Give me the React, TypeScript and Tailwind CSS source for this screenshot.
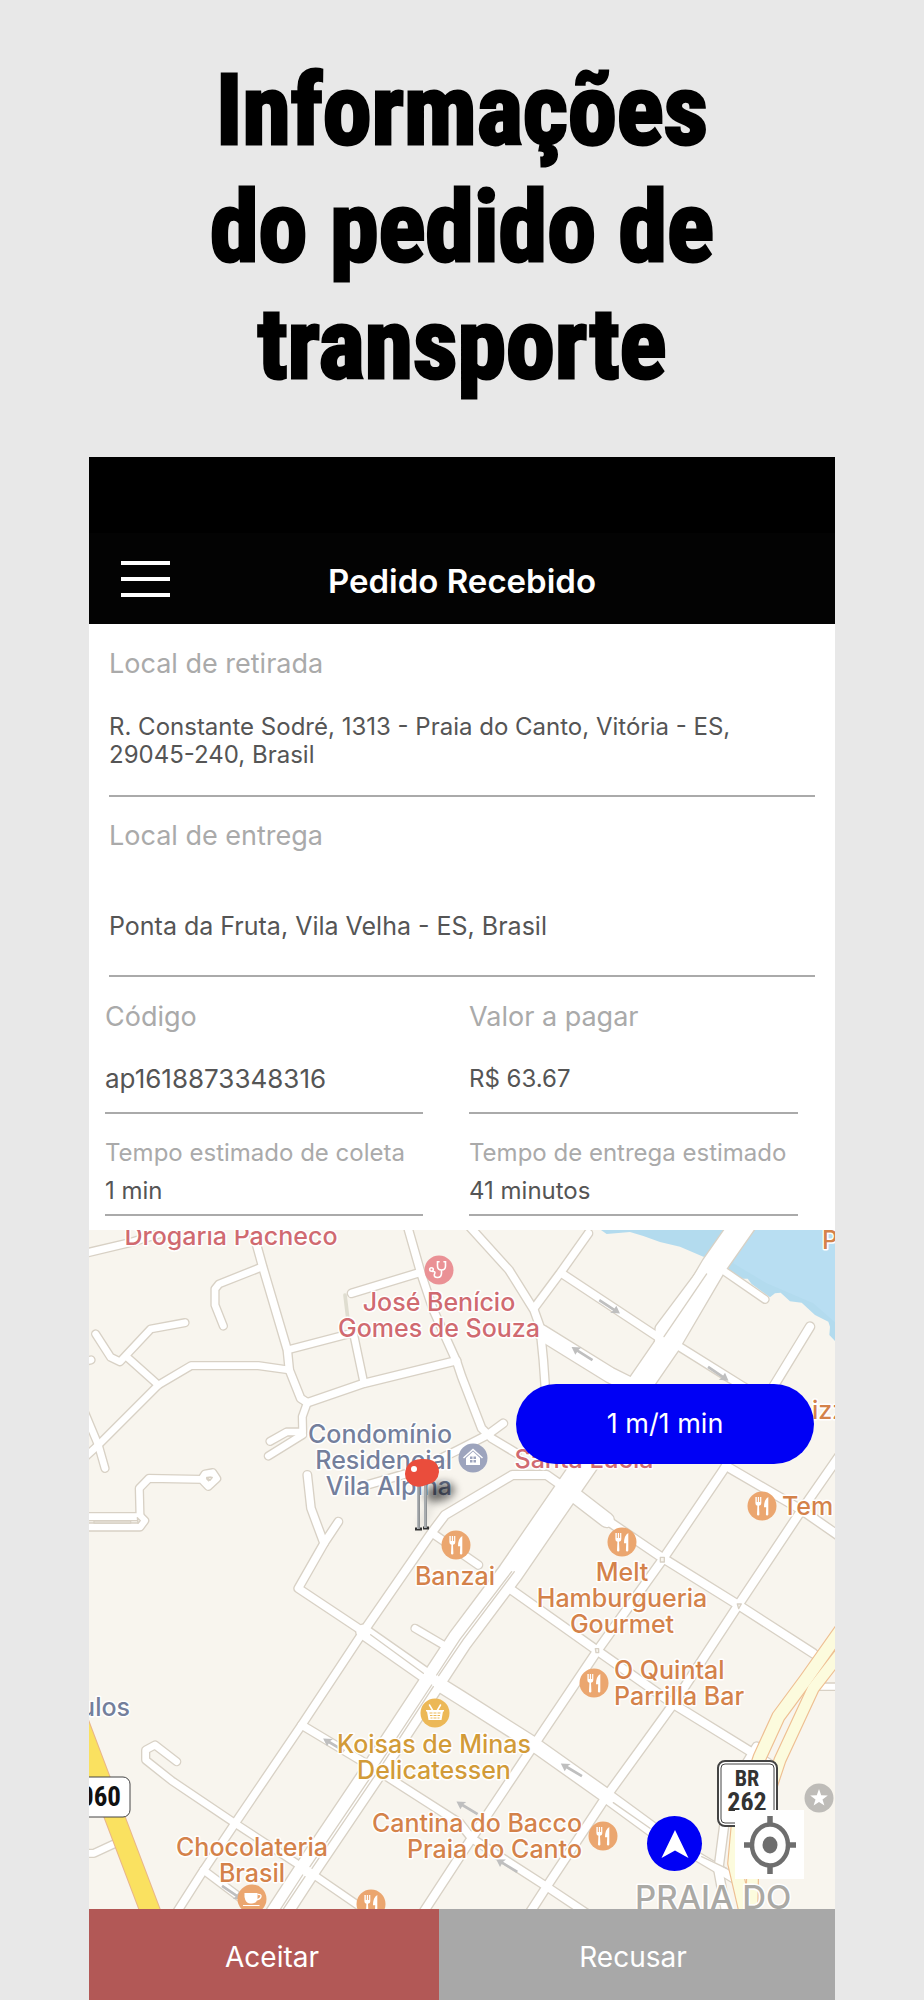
import type { ReactNode } from 'react';

interface FieldProps {
  label: string;
  value: string;
  labelClass: string;
  valueClass: string;
}

interface MapLabel {
  lines: string[];
  x: number;
  y: number;
  color: string;
  anchor?: 'start' | 'middle' | 'end';
}

type Road = [string, number];

const RED = '#d06a70';
const ORANGE = '#d4824a';
const BLUE = '#747f9c';
const GOLD = '#d29b38';

// path data and inner width of each street
const ROADS: Road[] = [
  ['M10 101L150 68L260 35', 21],
  ['M512 10L548 140L622 390L628 450L662 535L682 548', 22],
  ['M548 140L417 192L405 207V255L430 318', 20],
  ['M815 220L1022 157', 22],
  ['M980 10L1022 157L1060 270L1130 425L1145 470L1205 625L1235 655L1310 700', 22],
  ['M622 390L820 338L852 490', 20],
  ['M682 548L852 490L1130 422', 22],
  ['M682 548L667 590L668 636H620L570 664', 20],
  ['M668 644L565 708', 20],
  ['M628 450L535 437H333L235 495L55 675L10 716', 20],
  ['M235 495L145 415', 20],
  ['M47 342L92 412L120 425L212 327L315 308', 20],
  ['M15 580L55 675L75 745', 20],
  ['M10 425L33 420', 20],
  ['M180 885L178 805L207 775L365 778L375 762L398 758L410 776L385 799L365 778', 20],
  ['M10 890H182L194 902L180 921H10', 20],
  ['M682 765L693 865L732 970L655 1105L850 1235', 22],
  ['M775 905L732 970', 22],
  ['M1270 610L1222 645L1130 692L1000 755L850 798', 22],
  ['M850 1235L1055 938L1095 885L1297 765H1400L1450 800', 24],
  ['M1055 938L1195 1035', 22],
  ['M850 1235L665 1515L465 1810L365 1960L285 2085', 22],
  ['M665 1515L890 1650L1140 1810L1175 1855L1400 2000L1520 2080', 22],
  ['M850 1235L1060 1382', 42],
  ['M1060 1382L1140 1432L1360 1572L1580 1728L1730 1838', 40],
  ['M1730 1838L1920 1950L1970 1980', 24],
  ['M1005 1225L1090 1275', 20],
  ['M1890 125L1740 325L1738 370', 26],
  ['M1525 40L1440 160L1362 265', 22],
  ['M1160 10L1287 150L1362 270L1380 320L1390 420L1400 560L1390 740', 22],
  ['M1445 160L1740 355L1790 375L1990 500L2080 560', 22],
  ['M1385 338L1590 465L1690 515', 44],
  ['M2190 320L2080 500L1930 750L1747 1020L1552 1292L1362 1575L1175 1855L1028 2080', 24],
  ['M1450 800L1580 900', 42],
  ['M1580 900L1745 1012L1975 1155L2200 1300', 24],
  ['M1950 745L2165 870L2280 950', 24],
  ['M2290 690L2165 870L2065 1020L1975 1155L1780 1452L1580 1728L1400 2000L1345 2085', 24],
  ['M1295 1110L1552 1292L1780 1452L2020 1600L2080 1640', 24],
  ['M1935 155L2055 238', 20],
  ['M2200 1400H2280', 18],
  ['M2030 1580L1945 1720L1915 1950L1940 2085', 24],
  ['M290 1625L225 1575L197 1590V1620L275 1682L465 1810L680 1950L840 2060', 20],
  ['M370 1950L490 2040', 20],
  ['M10 1900H42L110 1868', 20],
  ['M2005 -10L1900 140L1765 370L1455 820L1290 1060L1140 1260L1060 1382L880 1655L680 1952L590 2090', 72],
];

const HIGHWAYS: Road[] = [
  ['M2300 1205L2180 1375L2095 1490L2040 1610L1975 1800L1963 1930L2000 2090', 36],
  ['M2300 1275L2200 1405L2100 1620L2020 1860L2015 2090', 32],
];

const MEDIANS = [
  'M1295 1055L1140 1258L1070 1365M1055 1395L890 1645L690 1940M668 1965L600 2070',
  'M1303 1055L1150 1258L1076 1367M1060 1400L895 1652L696 1945M675 1970L608 2070',
  'M872 1244L1030 1360',
  'M1880 162L1752 350',
  'M1600 1748L1710 1825',
  'M1865 1910L1940 1945',
];

const ISLANDS = ['M1741 1012h12v14h-12z', 'M1546 1286h10v12h-8z', 'M1972 1152h12l-8 14z', 'M172 893l9 9l-7 8z', 'M380 772h17l-7 9z', 'M42 903h110v6h-110z'];

// x, y, angle of the one-way arrows
const ARROWS = [
  [1588, 260, 33],
  [1507, 401, 212],
  [1914, 461, 34],
  [762, 1575, 211],
  [1162, 1764, 211],
  [1475, 1650, 211],
  [1281, 1937, 211],
  [456, 2018, 34],
];

const LABELS: MapLabel[] = [
  { lines: ['Drogaria Pacheco'], x: 142, y: 15, color: RED },
  { lines: ['José Benício', 'Gomes de Souza'], x: 350, y: 81, color: RED },
  { lines: ['Condomínio', 'Residencial', 'Vila Alpina'], x: 363, y: 213, color: BLUE, anchor: 'end' },
  { lines: ['Santa Lucia'], x: 495, y: 238, color: RED },
  { lines: ['izza'], x: 723, y: 189, color: ORANGE, anchor: 'start' },
  { lines: ['P'], x: 733, y: 19, color: ORANGE, anchor: 'start' },
  { lines: ['Tem'], x: 693, y: 285, color: ORANGE, anchor: 'start' },
  { lines: ['Banzai'], x: 366, y: 355, color: ORANGE },
  { lines: ['Melt', 'Hamburgueria', 'Gourmet'], x: 533, y: 351, color: ORANGE },
  { lines: ['O Quintal', 'Parrilla Bar'], x: 525, y: 449, color: ORANGE, anchor: 'start' },
  { lines: ['Koisas de Minas', 'Delicatessen'], x: 345, y: 523, color: GOLD },
  { lines: ['Cantina do Bacco', 'Praia do Canto'], x: 493, y: 602, color: ORANGE, anchor: 'end' },
  { lines: ['Chocolateria', 'Brasil'], x: 163, y: 626, color: ORANGE },
  { lines: ['ulos'], x: 41, y: 486, color: BLUE, anchor: 'end' },
];

const RESTAURANTS = [
  [367, 315],
  [533, 312],
  [673, 276],
  [505, 453],
  [514, 606],
  [282, 674],
];

function Field({ label, value, labelClass, valueClass }: FieldProps) {
  return (
    <div className="flex flex-col border-b-2 border-[#aaaaaa]">
      <dt className={`text-[#aaaaaa] ${labelClass}`}>{label}</dt>
      <dd className={`text-[#555555] ${valueClass}`}>{value}</dd>
    </div>
  );
}

function Poi({ x, y, color, children }: { x: number; y: number; color: string; children: ReactNode }) {
  return (
    <g transform={`translate(${x} ${y})`}>
      <circle r="14.5" fill={color} />
      {children}
    </g>
  );
}

function ForkKnife() {
  return (
    <g fill="#fff">
      <path d="M-6.600-9v6.200q0 2 2 2.600L-5 8.600q0 1 1.200 1t1.200-1L-3-.2q2.300-.6 2.300-2.600V-9h-1.200v5h-1V-9h-1.300v5h-1V-9z" />
      <path d="M6.300-9Q2-6.500 2 1.200H4.200L3.900 8.600q0 1 1.200 1t1.200-1z" />
    </g>
  );
}

function StreetMap() {
  return (
    <svg viewBox="0 0 746 679" className="block h-auto w-full" role="img" aria-label="Mapa">
      <defs>
        <filter id="soft" x="-50%" y="-50%" width="200%" height="200%">
          <feGaussianBlur stdDeviation="4" />
        </filter>
      </defs>
      <rect width="746" height="679" fill="#f8f5ee" />

      <g transform="scale(0.33333) translate(-27 -30)" fill="none" strokeLinecap="round" strokeLinejoin="round">
        <path
          d="M1563 20V30L1580 42L1650 36L1690 48L1740 66L1800 80L1870 110L1945 110L1945 150L1970 168L1990 176L2003 176L2015 192L2070 232L2085 220L2102 218L2130 244L2165 248L2205 285L2245 305L2250 320L2248 345L2265 363H2290V20Z"
          fill="#b3dbee"
        />
        <path d="M2000 20L1960 130L2060 190L2200 250L2280 320V20Z" fill="#b8def2" />
        <path d="M795 225L803 292" stroke="#dfddd0" strokeWidth="11" />
        {ROADS.map(([d, w]) => (
          <path key={d} d={d} stroke="#d8d1c5" strokeWidth={w + 8} />
        ))}
        {ROADS.map(([d, w]) => (
          <path key={d} d={d} stroke="#fff" strokeWidth={w} />
        ))}
        {MEDIANS.map(d => (
          <path key={d} d={d} stroke="#d8d1c5" strokeWidth="4" />
        ))}
        {ISLANDS.map(d => (
          <path key={d} d={d} stroke="#d8d1c5" strokeWidth="4" fill="#f8f5ee" />
        ))}
        {HIGHWAYS.map(([d, w]) => (
          <path key={d} d={d} stroke="#eebf92" strokeWidth={w + 7} />
        ))}
        {HIGHWAYS.map(([d, w]) => (
          <path key={d} d={d} stroke="#fcfbdd" strokeWidth={w} />
        ))}
        <path d="M-30 1438L220 2098" stroke="#e9b58a" strokeWidth="63" />
        <path d="M-30 1438L220 2098" stroke="#fae160" strokeWidth="57" />
        {ARROWS.map(([x, y, angle]) => (
          <g key={`${x}-${y}`} transform={`translate(${x} ${y}) rotate(${angle})`} fill="#bfbfbf">
            <path d="M-36-4H16V-14L38 0L12 14L16 4H-36Z" />
          </g>
        ))}
      </g>

      {/* highway shields */}
      <rect x="-20" y="547" width="61" height="40" rx="7" fill="#fff" stroke="#444" />
      <rect x="629" y="531" width="59" height="65" rx="7" fill="#fff" stroke="#444" strokeWidth="2" />
      <rect x="632" y="534" width="53" height="59" rx="4" fill="#fff" stroke="#444" />
      <g className="font-['Roboto_Condensed','Roboto',sans-serif] font-bold">
        <text x="32" y="576" textAnchor="end" fontSize="27" fill="#111">060</text>
        <text x="658" y="556" textAnchor="middle" fontSize="22" fill="#333">BR</text>
        <text x="658" y="581" textAnchor="middle" fontSize="26" fill="#333">262</text>
      </g>

      <g className="font-['Inter',sans-serif] font-medium" stroke="#fff" strokeWidth="3" strokeLinejoin="round" style={{ paintOrder: 'stroke' }}>
        {LABELS.map(label =>
          label.lines.map((line, i) => (
            <text
              key={line}
              x={label.x}
              y={label.y + i * 26}
              fontSize="25"
              fill={label.color}
              textAnchor={label.anchor ?? 'middle'}
            >
              {line}
            </text>
          ))
        )}
        <text x="546" y="679" fontSize="33" fill="#aaa9a5">PRAIA DO</text>
      </g>

      {RESTAURANTS.map(([x, y]) => (
        <Poi key={`${x}-${y}`} x={x} y={y} color="#eba66f">
          <ForkKnife />
        </Poi>
      ))}
      <Poi x={350} y={40} color="#ea9195">
        <g fill="none" stroke="#fff" strokeWidth="1.600" strokeLinecap="round">
          <circle cx="-7.500" cy="-.5" r="1.800" />
          <path d="M-6.500 1.500Q-3 1-4.500 4Q-5.500 7.500-1.500 7.500Q2.500 7.500 2.500 3V0M0-8.200H-1.500V-4Q-1.500 0 2.500 0Q6.500 0 6.500-4V-8.200H5" />
        </g>
      </Poi>
      <Poi x={384} y={228} color="#9da4bd">
        <path d="M-9.500 0L0-8.500L9.500 0" fill="none" stroke="#fff" strokeWidth="1.500" />
        <path d="M0-6.500L7 0V7H-7V0Z" fill="#fff" />
        <path d="M-3-1.500h2.500V1H-3zM.5-1.500H3V1H.5zM-3 2h2.500v2.500H-3zM.5 2H3v2.500H.5z" fill="#9da4bd" />
      </Poi>
      <Poi x={346} y={483} color="#ecb857">
        <path d="M-5.500-8L-2-2M5.500-8L2-2" stroke="#fff" strokeWidth="1.500" strokeLinecap="round" />
        <path d="M-9-3H9V-1.500H8L6.500 7H-6.500L-8-1.500H-9Z" fill="#fff" />
        <path d="M-5.500 0h3M-1.500 0h3M2.500 0h3M-5 2.500h2.500M-1.500 2.500h3M2.500 2.500H5M-4.500 5h2M-1.500 5h3M2.500 5h2" stroke="#ecb857" strokeWidth="1.200" />
      </Poi>
      <Poi x={163} y={669} color="#eba66f">
        <path d="M-7.500-6H5.500V0Q4.500 4.500 0 4.500H-2Q-6.500 4-7.500-2ZM-9 6H7.500V7H-9Z" fill="#fff" />
        <path d="M5.500-4.500Q9.500-5 9-2.500T4.500 1" fill="none" stroke="#fff" strokeWidth="1.300" />
      </Poi>
      <Poi x={730} y={568} color="#bebcb8">
        <path d="M0-9L2.200-2.800L8.800-2.600L3.500 1.400L5.400 7.600L0 3.900L-5.400 7.600L-3.500 1.400L-8.800-2.600L-2.200-2.800Z" fill="#fff" />
      </Poi>

      {/* pickup pin */}
      <ellipse cx="351" cy="262" rx="15" ry="9" fill="#000" opacity=".55" filter="url(#soft)" transform="rotate(-15 351 262)" />
      <path d="M345 265Q338 285 330 299" fill="none" stroke="#000" strokeWidth="5" opacity=".12" filter="url(#soft)" />
      <path d="M326 299h7M334 298h6" stroke="#333" strokeWidth="3" />
      <path d="M329.500 255V299M336.500 255V298" stroke="#8e9295" strokeWidth="3" />
      <path d="M328.800 255V299M336 255V298" stroke="#c3c7c9" />
      <path d="M316 244Q317 230 332 229Q350 228 350 242Q349 253 337 255Q331 258 325 256Q316 252 316 244Z" fill="#ea4d3c" />
      <circle cx="325" cy="239" r="3" fill="#fff" />
    </svg>
  );
}

export default function App() {
  return (
    <div className="flex min-h-screen flex-col bg-[#e8e8e8] px-[89px] font-['Inter','Liberation_Sans',sans-serif]">
      <h1 className="pt-[52px] pb-[54px] text-center font-['Roboto_Condensed','Roboto',sans-serif] text-[98px] leading-[117px] font-bold text-black [-webkit-text-stroke:3px_black]">
        Informações
        <br />
        do pedido de
        <br />
        transporte
      </h1>

      <main className="flex flex-col bg-white">
        <header className="bg-black pt-[76px]">
          <div className="grid h-[91px] grid-cols-[1fr_auto_1fr] items-center bg-[#030303] px-8">
            <button type="button" aria-label="Menu" className="flex w-[49px] flex-col gap-3">
              <span className="h-1 w-full bg-white" />
              <span className="h-1 w-full bg-white" />
              <span className="h-1 w-full bg-white" />
            </button>
            <h2 className="pt-1 text-[33px] leading-10 font-semibold text-white">Pedido Recebido</h2>
          </div>
        </header>

        <dl className="flex flex-col pb-[14px]">
          <div className="flex flex-col px-5">
            <Field
              label="Local de retirada"
              value="R. Constante Sodré, 1313 - Praia do Canto, Vitória - ES, 29045-240, Brasil"
              labelClass="pt-[22px] text-[27px] leading-9"
              valueClass="pt-[31px] pb-[26px] text-[24px] leading-7"
            />
            <Field
              label="Local de entrega"
              value="Ponta da Fruta, Vila Velha - ES, Brasil"
              labelClass="pt-[21px] text-[27px] leading-9"
              valueClass="pt-[56px] pb-[33px] text-[25px] leading-8"
            />
          </div>
          <div className="grid grid-cols-[318fr_329fr] gap-x-[46px] pr-[37px] pl-4">
            <Field
              label="Código"
              value="ap1618873348316"
              labelClass="pt-[22px] text-[27px] leading-9"
              valueClass="pt-[28px] pb-[17px] text-[26px] leading-8"
            />
            <Field
              label="Valor a pagar"
              value="R$ 63.67"
              labelClass="pt-[22px] text-[27px] leading-9"
              valueClass="pt-[28px] pb-[17px] text-[24px] leading-8"
            />
            <Field
              label="Tempo estimado de coleta"
              value="1 min"
              labelClass="pt-[23px] text-[24px] leading-8 whitespace-nowrap"
              valueClass="pt-[6px] pb-[7px] text-[24px] leading-8"
            />
            <Field
              label="Tempo de entrega estimado"
              value="41 minutos"
              labelClass="pt-[23px] text-[24px] leading-8 whitespace-nowrap"
              valueClass="pt-[6px] pb-[7px] text-[24px] leading-8"
            />
          </div>
        </dl>

        <section className="relative overflow-hidden">
          <StreetMap />
          <div className="absolute top-[154px] right-[21px] flex h-20 w-[298px] items-center justify-center rounded-full bg-[#0000f5] text-[27px] text-white">
            1 m/1 min
          </div>
          <button
            type="button"
            aria-label="Navegar"
            className="absolute right-[133px] bottom-[38px] flex size-[55px] items-center justify-center rounded-full bg-[#0000f5]"
          >
            <svg viewBox="0 0 28 28" className="size-7" fill="#fff">
              <path d="M14 0L27.500 28L14 20.500L.5 28Z" />
            </svg>
          </button>
          <button
            type="button"
            aria-label="Minha localização"
            className="absolute right-[31px] bottom-[30px] flex size-[69px] items-center justify-center bg-white"
          >
            <svg viewBox="0 0 52 58" className="h-[58px] w-[52px]" fill="none" stroke="#6e6e6e">
              <ellipse cx="26" cy="29" rx="18" ry="20.500" strokeWidth="4.500" />
              <ellipse cx="26" cy="29" rx="7.500" ry="8.500" fill="#6e6e6e" stroke="none" />
              <path d="M26 0V10M26 48V58M0 29H10M42 29H52" strokeWidth="5.500" />
            </svg>
          </button>
        </section>

        <footer className="grid h-[91px] grid-cols-[350fr_396fr] text-[28px] text-white">
          <button type="button" className="bg-[#b25856] pt-1 pl-4">
            Aceitar
          </button>
          <button type="button" className="bg-[#a8a8a8] pt-1 pr-2">
            Recusar
          </button>
        </footer>
      </main>
    </div>
  );
}
